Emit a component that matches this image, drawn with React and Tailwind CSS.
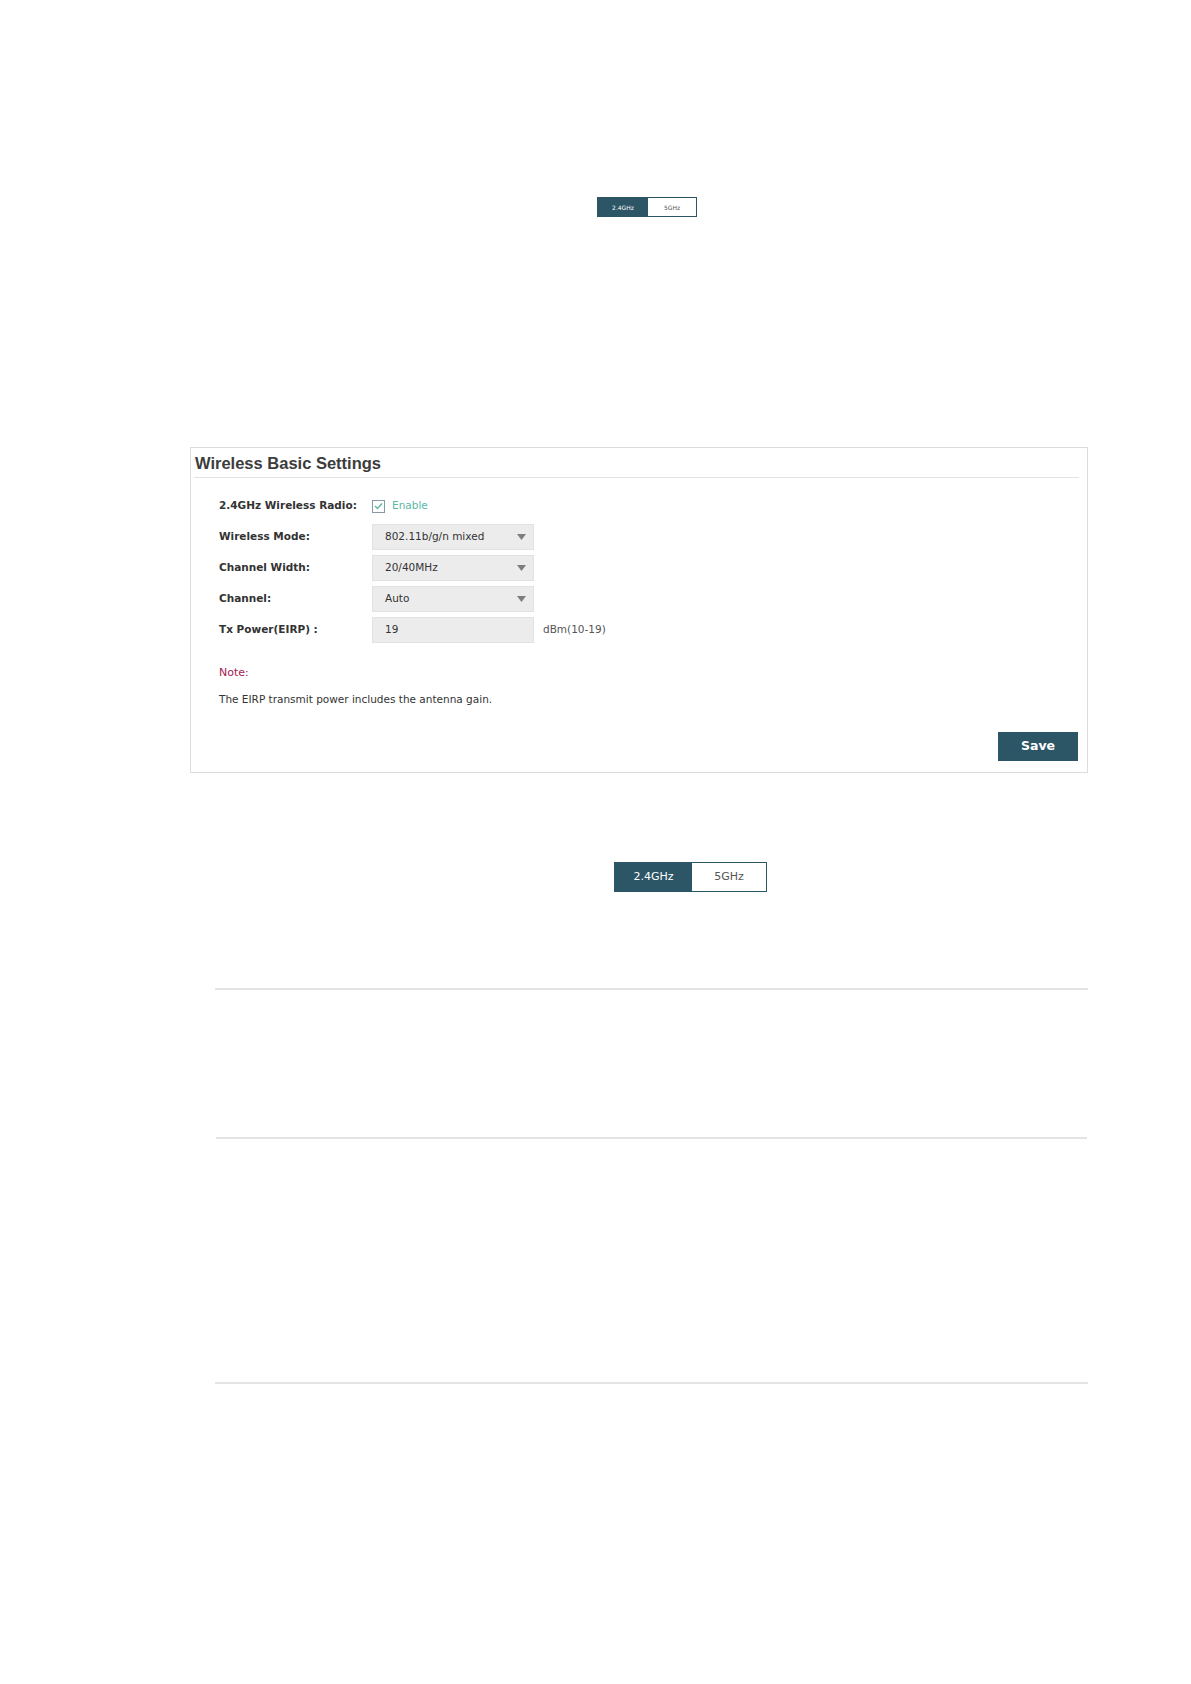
import React from "react";

const FONT = { fontFamily: "'DejaVu Sans', Verdana, sans-serif" };

const BandToggle = ({ small }) => {
  if (small) {
    return (
      <div className="ml-[597px] flex h-[20px] w-[100px] border border-[#2c5566] text-[6px]">
        <div className="flex w-[50px] items-center justify-center bg-[#2c5566] text-white">2.4GHz</div>
        <div className="flex flex-1 items-center justify-center bg-white text-[#555]">5GHz</div>
      </div>
    );
  }
  return (
    <div className="ml-[614px] flex h-[30px] w-[153px] border border-[#2c5566] text-[11px]">
      <div className="flex w-[77px] items-center justify-center bg-[#2c5566] text-white">2.4GHz</div>
      <div className="flex flex-1 items-center justify-center bg-white text-[#555]">5GHz</div>
    </div>
  );
};

const Select = ({ value }) => (
  <div className="flex h-[26px] w-[162px] items-center justify-between border border-[#e2e2e2] bg-[#ececec] pl-[12px] pr-[7px] text-[10.5px] text-[#333]">
    <span>{value}</span>
    <svg width="9" height="6" viewBox="0 0 9 6">
      <path d="M0 0 H9 L4.5 6 Z" fill="#7d7d7d" />
    </svg>
  </div>
);

const Row = ({ label, children }) => (
  <div className="flex h-[26px] items-center">
    <div className="w-[153px] text-[10.5px] font-bold text-[#333]">{label}</div>
    {children}
  </div>
);

export default function App() {
  return (
    <div className="min-h-[1684px] w-[1191px] bg-white pt-[197px]" style={FONT}>
      <BandToggle small />

      {/* Wireless Basic Settings panel */}
      <div className="ml-[190px] mt-[230px] flex h-[326px] w-[898px] flex-col border border-[#dcdcdc]">
        <div className="ml-[3px] mr-[8px] flex h-[30px] items-center border-b border-[#e3e3e3] pl-[1px] pt-[1px]">
          <span className="text-[16.5px] font-bold text-[#3c3c3c]" style={{ fontFamily: "'Liberation Sans', Arial, sans-serif" }}>
            Wireless Basic Settings
          </span>
        </div>

        <div className="ml-[28px] mt-[15px] flex flex-col gap-[5px]">
          <Row label="2.4GHz Wireless Radio:">
            <div className="flex items-center gap-[7px]">
              <div className="flex h-[13px] w-[13px] items-center justify-center border border-[#8a9aa3] bg-white">
                <svg width="9" height="8" viewBox="0 0 9 8">
                  <path d="M1 4 L3.5 6.5 L8 1.5" fill="none" stroke="#5cb8a6" strokeWidth="1.4" />
                </svg>
              </div>
              <span className="text-[10.5px] text-[#5cb8a6]">Enable</span>
            </div>
          </Row>
          <Row label="Wireless Mode:">
            <Select value="802.11b/g/n mixed" />
          </Row>
          <Row label="Channel Width:">
            <Select value="20/40MHz" />
          </Row>
          <Row label="Channel:">
            <Select value="Auto" />
          </Row>
          <Row label="Tx Power(EIRP) :">
            <div className="flex h-[26px] w-[162px] items-center border border-[#e2e2e2] bg-[#ececec] pl-[12px] text-[10.5px] text-[#333]">
              19
            </div>
            <span className="ml-[9px] text-[10.5px] text-[#555]">dBm(10-19)</span>
          </Row>
        </div>

        <div className="ml-[28px] mt-[22px] text-[11px] text-[#a3214f]">Note:</div>
        <div className="ml-[28px] mt-[10px] text-[10.5px] text-[#333]">
          The EIRP transmit power includes the antenna gain.
        </div>

        <div className="mt-auto mb-[11px] mr-[9px] flex justify-end">
          <button className="h-[29px] w-[80px] bg-[#2c5566] text-[12.5px] font-bold text-white">Save</button>
        </div>
      </div>

      <div className="mt-[89px]">
        <BandToggle />
      </div>

      <div className="ml-[215px] mt-[96px] h-[2px] w-[873px] bg-[#e4e4e4]" />
      <div className="ml-[216px] mt-[147px] h-[2px] w-[871px] bg-[#e4e4e4]" />
      <div className="ml-[215px] mt-[243px] h-[2px] w-[873px] bg-[#e4e4e4]" />
    </div>
  );
}
